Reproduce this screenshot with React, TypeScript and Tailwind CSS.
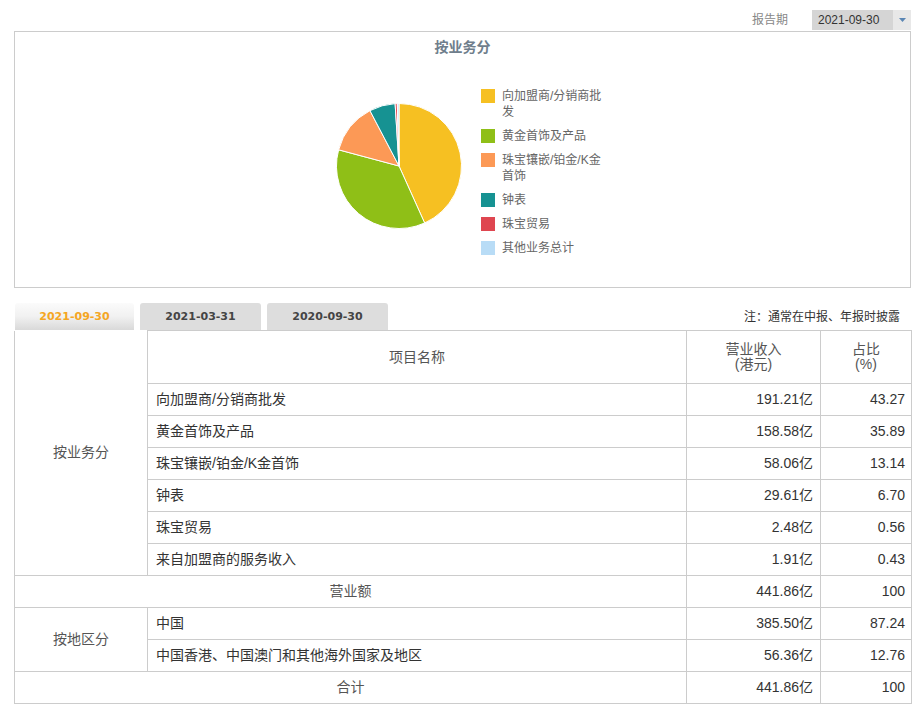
import React from 'react';

const font = { fontFamily: '"Liberation Sans", "Noto Sans CJK SC", sans-serif' };

const slices = [
  { name: '向加盟商/分销商批发', value: 43.27, fill: '#f6c022', swatch: 'bg-[#f6c022]' },
  { name: '黄金首饰及产品', value: 35.89, fill: '#8fbf17', swatch: 'bg-[#8fbf17]' },
  { name: '珠宝镶嵌/铂金/K金首饰', value: 13.14, fill: '#fc9956', swatch: 'bg-[#fc9956]' },
  { name: '钟表', value: 6.7, fill: '#169292', swatch: 'bg-[#169292]' },
  { name: '珠宝贸易', value: 0.56, fill: '#df4650', swatch: 'bg-[#df4650]' },
  { name: '其他业务总计', value: 0.43, fill: '#b8dcf6', swatch: 'bg-[#b8dcf6]' },
];

const business = [
  { name: '向加盟商/分销商批发', amount: '191.21亿', pct: '43.27' },
  { name: '黄金首饰及产品', amount: '158.58亿', pct: '35.89' },
  { name: '珠宝镶嵌/铂金/K金首饰', amount: '58.06亿', pct: '13.14' },
  { name: '钟表', amount: '29.61亿', pct: '6.70' },
  { name: '珠宝贸易', amount: '2.48亿', pct: '0.56' },
  { name: '来自加盟商的服务收入', amount: '1.91亿', pct: '0.43' },
];

const regions = [
  { name: '中国', amount: '385.50亿', pct: '87.24' },
  { name: '中国香港、中国澳门和其他海外国家及地区', amount: '56.36亿', pct: '12.76' },
];

const Pie = () => {
  const cx = 64;
  const cy = 64;
  const r = 62.5;
  const total = slices.reduce((s, x) => s + x.value, 0);
  let start = 0;
  return (
    <svg width="128" height="128" viewBox="0 0 128 128">
      {slices.map((s) => {
        const a0 = start;
        const a1 = start + (s.value / total) * Math.PI * 2;
        start = a1;
        const x0 = cx + r * Math.sin(a0);
        const y0 = cy - r * Math.cos(a0);
        const x1 = cx + r * Math.sin(a1);
        const y1 = cy - r * Math.cos(a1);
        const large = a1 - a0 > Math.PI ? 1 : 0;
        const d = `M${cx} ${cy} L${x0} ${y0} A${r} ${r} 0 ${large} 1 ${x1} ${y1} Z`;
        return <path key={s.name} d={d} fill={s.fill} stroke="#fff" strokeWidth="1" strokeLinejoin="round" />;
      })}
    </svg>
  );
};

const cell = 'border border-[#cccccc]';

const App = () => {
  const tabs = ['2021-09-30', '2021-03-31', '2020-09-30'];

  return (
    <div className="w-[919px] h-[706px] bg-white pl-[14px] pr-[8px] overflow-hidden" style={font}>
      {/* report period selector */}
      <div className="h-[31px] flex justify-end items-start pt-[10px]">
        <span className="text-[12px] leading-[20px] text-[#888] mr-[24px]">报告期</span>
        <div className="w-[99px] h-[20px] flex bg-[#d5d5d5]">
          <span className="flex-1 pl-[6px] text-[12px] leading-[20px] text-[#333]">2021-09-30</span>
          <span className="w-[18px] h-[20px] bg-[#e8e8e8] flex items-center justify-center">
            <svg width="7" height="4" viewBox="0 0 7 4">
              <path d="M0 0 L7 0 L3.5 4 Z" fill="#5a86b4" />
            </svg>
          </span>
        </div>
      </div>

      {/* chart panel */}
      <div className="h-[257px] border border-[#cccccc]">
        <div className="pt-[7px] text-center text-[14px] leading-[16px] font-bold text-[#6f7e8c]">按业务分</div>
        <div className="flex items-start mt-[33px] pl-[320px]">
          <div className="mt-[14px]">
            <Pie />
          </div>
          <ul className="ml-[18px] flex flex-col gap-[8px]">
            {slices.map((s) => (
              <li key={s.name} className="flex items-start">
                <span className={`w-[14px] h-[14px] mt-[1px] ${s.swatch}`} />
                <span className="ml-[7px] w-[104px] text-[12px] leading-[16px] text-[#666]">{s.name}</span>
              </li>
            ))}
          </ul>
        </div>
      </div>

      {/* tabs */}
      <div className="mt-[15px] h-[27px] flex items-end justify-between">
        <div className="flex gap-[6px] pl-px">
          {tabs.map((t, i) => (
            <div
              key={t}
              className={
                i === 0
                  ? 'w-[119px] h-[27px] rounded-t-[3px] bg-linear-to-b from-[#fbfbfb] via-[#f1f1f1] to-[#d9d9d9] text-center text-[11px] leading-[27px] font-bold text-[#f5a623]'
                  : 'w-[121px] h-[27px] rounded-t-[3px] bg-[#dddddd] text-center text-[11px] leading-[27px] font-bold text-[#444]'
              }
              style={{ fontFamily: '"DejaVu Sans", sans-serif' }}
            >
              {t}
            </div>
          ))}
        </div>
        <div className="self-center pr-[11px] text-[12px] leading-[16px] text-[#333]">注：通常在中报、年报时披露</div>
      </div>

      {/* data table */}
      <table className="w-[897px] table-fixed border-collapse text-[14px] text-[#333]">
        <colgroup>
          <col className="w-[133px]" />
          <col className="w-[539px]" />
          <col className="w-[134px]" />
          <col className="w-[91px]" />
        </colgroup>
        <tbody>
          <tr className="h-[53px] text-[#555]">
            <td rowSpan={business.length + 1} className={`${cell} border-t-0 text-center text-[#555]`}>
              按业务分
            </td>
            <td className={`${cell} text-center`}>项目名称</td>
            <td className={`${cell} text-center leading-[15px]`}>
              营业收入
              <br />
              (港元)
            </td>
            <td className={`${cell} text-center leading-[15px]`}>
              占比
              <br />
              (%)
            </td>
          </tr>
          {business.map((row) => (
            <tr key={row.name} className="h-[32px]">
              <td className={`${cell} pl-[8px]`}>{row.name}</td>
              <td className={`${cell} text-right pr-[7px]`}>{row.amount}</td>
              <td className={`${cell} text-right pr-[6px]`}>{row.pct}</td>
            </tr>
          ))}
          <tr className="h-[32px]">
            <td colSpan={2} className={`${cell} text-center text-[#555]`}>营业额</td>
            <td className={`${cell} text-right pr-[7px]`}>441.86亿</td>
            <td className={`${cell} text-right pr-[6px]`}>100</td>
          </tr>
          {regions.map((row, i) => (
            <tr key={row.name} className="h-[32px]">
              {i === 0 && (
                <td rowSpan={regions.length} className={`${cell} text-center text-[#555]`}>
                  按地区分
                </td>
              )}
              <td className={`${cell} pl-[8px]`}>{row.name}</td>
              <td className={`${cell} text-right pr-[7px]`}>{row.amount}</td>
              <td className={`${cell} text-right pr-[6px]`}>{row.pct}</td>
            </tr>
          ))}
          <tr className="h-[32px]">
            <td colSpan={2} className={`${cell} text-center text-[#555]`}>合计</td>
            <td className={`${cell} text-right pr-[7px]`}>441.86亿</td>
            <td className={`${cell} text-right pr-[6px]`}>100</td>
          </tr>
        </tbody>
      </table>
    </div>
  );
};

export default App;
